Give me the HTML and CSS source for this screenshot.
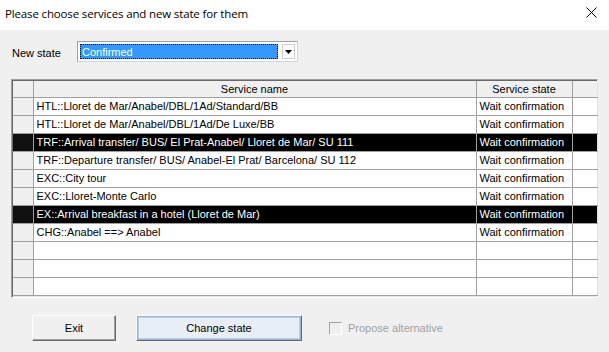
FILE: index.html
```html
<!DOCTYPE html>
<html>
<head>
<meta charset="utf-8">
<link rel="stylesheet" href="styles.css">
</head>
<body>
<div class="window">
  <div class="titlebar">
    <span class="title">Please choose services and new state for them</span>
    <svg class="close" width="11" height="11" viewBox="0 0 11 11"><path d="M0.5 0.5 L10.5 10.5 M10.5 0.5 L0.5 10.5" stroke="#000" stroke-width="1" fill="none"/></svg>
  </div>
  <div class="client">
    <div class="state-row">
      <span class="label">New state</span>
      <div class="combo">
        <div class="combo-value"><span>Confirmed</span></div>
        <div class="combo-btn"><svg width="7" height="4" viewBox="0 0 7 4"><path d="M0 0 H7 L3.5 4 Z" fill="#000"/></svg></div>
      </div>
    </div>
    <div class="grid">
      <table>
        <colgroup><col class="c-ind"><col class="c-name"><col class="c-state"><col class="c-extra"></colgroup>
        <tr class="hdr"><td></td><td class="center">Service name</td><td class="center">Service state</td><td></td></tr>
        <tr><td class="fix"></td><td>HTL::Lloret de Mar/Anabel/DBL/1Ad/Standard/BB</td><td>Wait confirmation</td><td></td></tr>
        <tr><td class="fix"></td><td>HTL::Lloret de Mar/Anabel/DBL/1Ad/De Luxe/BB</td><td>Wait confirmation</td><td></td></tr>
        <tr class="sel"><td class="fix"></td><td>TRF::Arrival transfer/ BUS/ El Prat-Anabel/ Lloret de Mar/ SU 111</td><td>Wait confirmation</td><td></td></tr>
        <tr><td class="fix"></td><td>TRF::Departure transfer/ BUS/ Anabel-El Prat/ Barcelona/ SU 112</td><td>Wait confirmation</td><td></td></tr>
        <tr><td class="fix"></td><td>EXC::City tour</td><td>Wait confirmation</td><td></td></tr>
        <tr><td class="fix"></td><td>EXC::Lloret-Monte Carlo</td><td>Wait confirmation</td><td></td></tr>
        <tr class="sel"><td class="fix"></td><td>EX::Arrival breakfast in a hotel (Lloret de Mar)</td><td>Wait confirmation</td><td></td></tr>
        <tr><td class="fix"></td><td>CHG::Anabel ==&gt; Anabel</td><td>Wait confirmation</td><td></td></tr>
        <tr><td class="fix"></td><td></td><td></td><td></td></tr>
        <tr><td class="fix"></td><td></td><td></td><td></td></tr>
        <tr><td class="fix"></td><td></td><td></td><td></td></tr>
      </table>
    </div>
    <div class="buttons">
      <div class="btn exit">Exit</div>
      <div class="btn change">Change state</div>
      <div class="check"><span class="box"></span><span class="check-label">Propose alternative</span></div>
    </div>
  </div>
</div>
</body>
</html>
```

FILE: styles.css
```css
html, body {
  margin: 0;
  padding: 0;
}
body {
  width: 609px;
  height: 352px;
  background: #f0f0f0;
  overflow: hidden;
  font-family: "Liberation Sans", Arial, sans-serif;
  font-size: 11px;
  color: #000;
}
.window {
  width: 609px;
  height: 352px;
}
.titlebar {
  height: 30px;
  background: #fff;
  display: flex;
  align-items: center;
  justify-content: space-between;
  padding: 0 12px 0 5px;
  box-sizing: border-box;
}
.title {
  font-family: "Open Sans", "Liberation Sans", sans-serif;
  font-size: 11.5px;
  letter-spacing: -0.15px;
  position: relative;
  top: -2px;
}
.close {
  position: relative;
  top: -3px;
}
.client {
  padding: 11px 0 0 0;
}
.state-row {
  display: flex;
  align-items: center;
  height: 21px;
  padding-left: 12px;
}
.label {
  width: 65px;
  position: relative;
  top: 1px;
}
.combo {
  width: 221px;
  height: 21px;
  box-sizing: border-box;
  border: 1px solid #d4d4d4;
  border-top-color: #a0a0a0;
  border-left-color: #a0a0a0;
  background: #fff;
  display: flex;
  padding: 2px;
}
.combo-value {
  flex: 1;
  background: #3399ff;
  border: 1px dotted #000;
  color: #fff;
  display: flex;
  align-items: center;
  padding-left: 1px;
  margin-right: 4px;
}
.combo-btn {
  width: 13px;
  background: #fdfdfd;
  border: 1px solid #cfcfcf;
  box-sizing: border-box;
  display: flex;
  align-items: center;
  justify-content: center;
}
.grid {
  margin: 17px 0 0 11px;
  width: 587px;
  height: 219px;
  box-sizing: border-box;
  border-top: 1px solid #a0a0a0;
  border-left: 1px solid #a0a0a0;
  border-right: 1px solid #fff;
  border-bottom: 1px solid #fff;
  box-shadow: inset 1px 1px 0 #696969, inset -1px -1px 0 #e3e3e3;
  padding: 1px 0 0 1px;
  background: #f0f0f0;
}
table {
  border-collapse: collapse;
  table-layout: fixed;
  width: 584px;
}
col.c-ind { width: 20px; }
col.c-name { width: 443px; }
col.c-state { width: 96px; }
col.c-extra { width: 25px; }
td {
  border-right: 1px solid #a0a0a0;
  border-bottom: 1px solid #a0a0a0;
  height: 17px;
  padding: 0 0 0 3px;
  background: #fff;
  white-space: nowrap;
  overflow: hidden;
  line-height: 17px;
}
td:last-child {
  border-right: 1px solid #e3e3e3;
}
tr.hdr td {
  height: 16px;
  line-height: 16px;
  background: #f0f0f0;
}
td.center {
  text-align: center;
  padding: 0;
}
td.fix {
  background: #f0f0f0;
  padding: 0;
}
tr.sel td {
  background: #000;
  color: #fff;
}
tr.sel td.fix {
  background: #101010;
}
.buttons {
  display: flex;
  align-items: center;
  margin: 17px 0 0 32px;
}
.btn {
  height: 26px;
  box-sizing: border-box;
  background: #f0f0f0;
  border: 1px solid;
  border-color: #fff #696969 #696969 #fff;
  box-shadow: inset -1px -1px 0 #a0a0a0;
  display: flex;
  align-items: center;
  justify-content: center;
}
.btn.exit {
  width: 84px;
}
.btn.change {
  width: 166px;
  margin-left: 20px;
  box-shadow: inset 0 0 0 1px #93b3d8, inset 0 0 0 2px #b9d0ea;
  background: #e8eef6;
}
.check {
  display: flex;
  align-items: center;
  margin-left: 27px;
  color: #a0a0a0;
}
.box {
  width: 11px;
  height: 11px;
  border: 1px solid #a0a0a0;
  border-right-color: #fff;
  border-bottom-color: #fff;
  background: #f0f0f0;
  margin-right: 6px;
}
```
